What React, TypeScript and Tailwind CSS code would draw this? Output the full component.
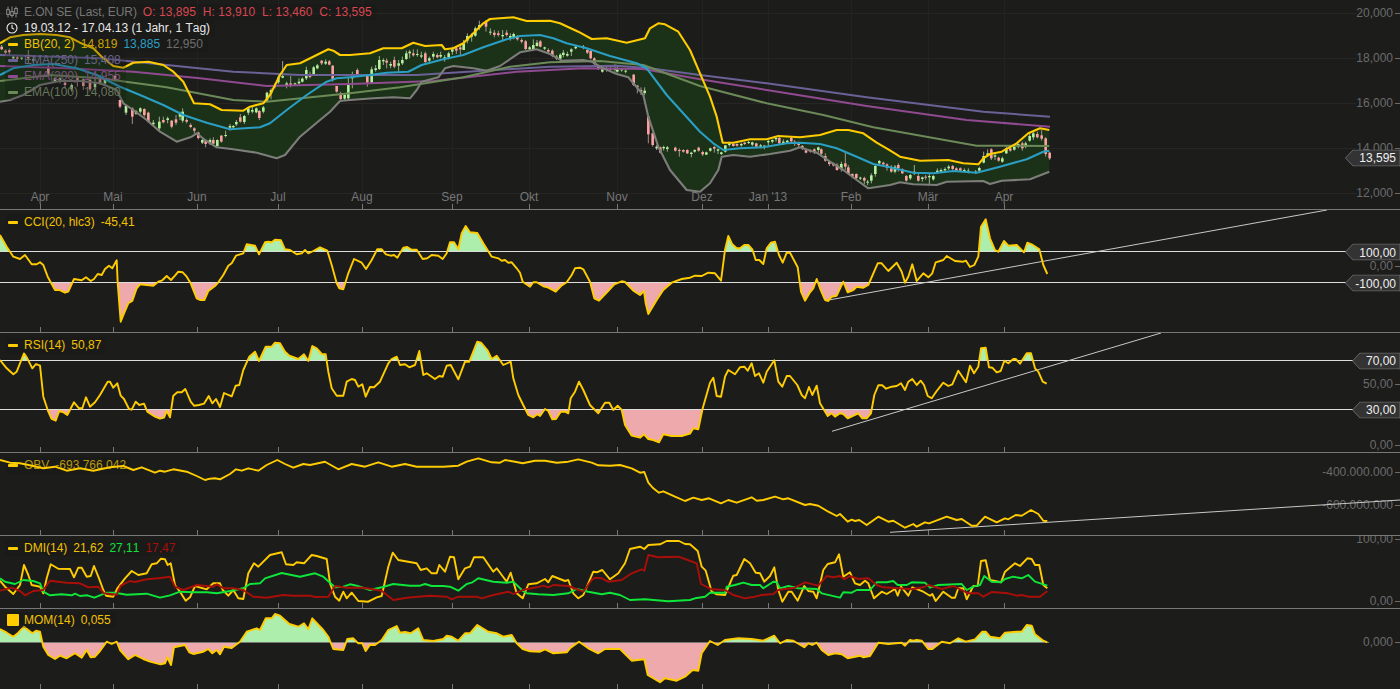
import type { ReactNode } from 'react';

type Pt = [number, number];

// traced points, read off 3x crops: x/3 + ox, y/3 + oy gives page pixels
const tr = (raw: string, ox: number, oy: number): Pt[] =>
    raw.trim().split(/\s+/).map((p) => {
        const [x, y] = p.split(',').map(Number);
        return [x / 3 + ox, y / 3 + oy] as Pt;
    });
const str = (pts: Pt[]) => pts.map(([x, y]) => `${x.toFixed(1)},${y.toFixed(1)}`).join(' ');

const YELLOW = '#ffcc00';

const bbUpper = [
    ...tr('0,130 30,112 70,105 120,102 170,105 210,112 240,128 280,145 305,170 340,198 370,203 400,188 445,185 490,195 520,215 550,245 582,310 630,313 665,330 730,332 750,320 790,310 810,285 840,225 860,195 900,190 950,165 985,148 1000,152 1020,165 1050,165', 0, 0),
    ...tr('60,160 100,145 155,145 190,128 225,138 275,135 285,148 310,145 340,130 370,100 400,70 420,57 490,52 530,63 600,62 630,70 685,95 725,117 770,115 830,128 885,115 900,85 925,70 945,73 985,95 1020,150 1050,220', 350, 0),
    ...tr('30,290 50,350 68,428 100,428 150,418 200,418 235,408 300,412 360,405 410,390 445,390 490,400 530,428 565,448 600,470 660,482 745,480 790,490 835,493 850,475 870,462 905,455 950,430 985,400 1020,385 1048,390', 700, 0),
];
const bbMid = [
    ...tr('0,225 40,205 100,195 160,192 230,205 290,225 360,260 420,285 490,315 550,345 620,368 690,388 780,382 810,370 860,330 920,285 980,245 1010,235 1050,232', 0, 0),
    ...tr('60,225 110,218 175,215 215,195 280,178 340,165 400,142 470,118 510,108 570,105 610,115 650,130 710,145 780,168 860,190 890,205 950,285 1050,395', 350, 0),
    ...tr('40,430 70,450 120,445 190,442 260,430 300,428 360,432 410,445 470,470 520,492 570,502 640,518 700,520 760,513 830,518 900,500 980,478 1030,455 1048,452', 700, 0),
];
const bbLower = [
    ...tr('0,305 30,300 70,285 120,255 180,243 240,243 300,250 350,270 370,310 400,330 440,360 480,395 530,425 575,410 590,400 615,420 650,442 700,448 770,458 830,475 855,465 900,410 960,360 990,335 1020,303 1050,300', 0, 0),
    ...tr('70,295 130,292 180,295 200,270 215,245 265,232 285,205 310,198 370,205 410,212 450,198 510,157 560,148 600,162 635,182 700,180 725,185 760,205 800,222 835,232 880,285 895,350 925,440 960,510 1010,570 1050,575', 350, 0),
    ...tr('30,550 55,510 65,470 100,465 150,470 210,462 270,452 300,442 350,458 390,485 430,510 470,540 505,565 570,555 600,547 640,553 710,555 740,545 850,543 870,552 905,542 990,538 1048,515', 700, 0),
];
const ema250 = [
    ...tr('0,165 100,168 300,175 500,195 700,215 900,225 1050,225', 0, 0),
    ...tr('200,225 400,212 600,200 800,197 900,205 1050,225', 350, 0),
    ...tr('200,250 500,292 850,335 1050,350', 700, 0),
];
const ema200 = [
    ...tr('0,198 200,205 400,215 600,235 800,258 1050,252', 0, 0),
    ...tr('250,243 500,215 700,205 880,207 1050,238', 350, 0),
    ...tr('200,270 500,318 800,360 1050,380', 700, 0),
];
const ema100 = [
    ...tr('0,243 150,225 300,235 500,262 700,300 800,305 1050,280', 0, 0),
    ...tr('150,262 340,232 480,200 600,187 750,183 880,195 1050,258', 350, 0),
    ...tr('200,310 370,345 520,382 830,437 1048,438', 700, 0),
];

const candles1 = '5,135,150,140,148,r 17,148,165,152,158,r 28,145,165,150,157,r 40,165,185,170,175,g 52,168,185,172,176,r 65,170,180,173,176,g 85,150,190,170,175,r 100,165,190,178,182,g 145,190,225,200,222,r 165,230,245,235,245,g 180,232,250,235,243,g 195,245,265,248,255,r 215,250,275,255,268,g 232,228,260,232,245,r 250,235,270,238,258,r 270,230,275,240,268,r 285,235,270,250,262,g 300,225,255,235,250,r 315,235,255,240,250,g 345,225,245,228,240,r 360,298,325,300,320,r 378,315,345,318,338,g 397,322,372,325,350,r 408,330,345,333,341,g 421,322,340,325,335,g 433,325,350,327,345,r 445,335,368,338,365,r 460,360,378,368,373,g 478,350,390,365,385,g 490,350,370,360,367,r 503,350,370,355,360,g 515,360,385,362,380,r 528,345,375,358,368,r 540,335,360,342,350,g 548,325,368,335,362,g 560,355,370,360,365,r 572,370,385,375,381,r 583,382,400,385,392,r 595,395,418,398,414,r 607,415,432,420,428,g 617,420,442,422,432,r 630,415,435,420,430,g 640,412,432,420,431,r 652,418,440,420,438,g 664,405,428,407,425,r 677,392,412,405,408,g 690,372,392,378,383,g 700,375,385,378,382,g 709,360,378,366,373,g 721,342,368,352,365,r 733,345,372,348,366,g 745,322,345,325,338,g 757,318,340,330,335,g 769,322,340,325,337,g 778,330,360,333,354,r 790,318,340,322,335,g 801,275,305,278,302,g 813,265,298,270,280,g 825,250,265,255,260,g 835,225,252,232,247,g 848,183,235,228,233,g 860,245,265,250,256,g 872,228,262,250,255,r 885,248,258,250,254,g 897,235,255,245,250,g 907,232,248,236,245,g 919,200,240,210,235,g 930,215,235,225,231,r 941,198,225,202,222,g 952,192,208,196,205,g 965,180,195,182,190,r 977,178,195,185,191,g 988,180,196,184,194,r 998,195,245,197,240,r 1010,258,278,258,275,r 1022,275,300,280,297,r 1034,280,300,285,296,g 1045,230,300,252,295,g';
const candles2 = '7,215,265,225,235,g 22,205,225,210,222,r 52,225,260,228,248,r 65,200,250,208,248,g 77,195,215,205,210,g 88,168,210,180,207,g 100,175,195,180,184,g 110,175,205,182,188,r 122,185,205,192,197,g 133,170,205,180,200,r 146,180,215,190,197,g 157,170,195,180,190,g 169,152,180,160,177,g 179,150,175,155,160,g 190,148,170,160,166,r 202,148,170,162,165,g 214,155,175,166,170,g 226,155,190,160,186,r 238,170,190,175,182,g 250,155,178,162,170,g 262,160,175,165,172,r 272,155,175,165,170,g 284,165,185,172,178,g 296,155,178,160,172,g 307,140,165,148,155,g 319,138,162,145,152,r 331,135,165,142,148,r 341,120,150,130,150,g 352,100,130,108,122,g 365,100,125,105,110,g 376,80,110,85,107,g 388,62,90,75,82,g 408,60,95,65,80,r 421,85,105,95,98,g 433,90,112,98,105,r 445,92,110,100,105,r 458,90,120,105,109,g 470,90,110,98,105,r 481,100,122,108,116,g 491,98,118,102,112,g 502,105,122,108,118,r 515,115,130,120,125,r 527,120,150,124,147,r 539,138,152,142,148,g 550,118,152,135,150,g 561,120,140,128,138,g 571,120,142,124,140,r 584,140,150,142,146,g 595,145,160,150,155,r 607,148,172,152,168,r 620,165,180,170,176,g 631,160,178,164,176,g 640,150,172,158,165,g 652,155,170,162,167,g 664,145,168,148,155,g 677,135,148,140,145,g 700,135,148,140,144,g 712,145,162,150,158,r 722,150,178,153,175,r 733,172,195,175,192,r 745,195,210,198,205,g 757,205,218,208,215,g 770,200,215,205,210,g 782,195,212,204,208,r 795,193,215,205,210,g 802,200,218,208,215,g 815,205,215,208,211,g 827,208,220,212,215,g 851,222,258,224,255,r 862,255,280,257,262,r 873,262,285,270,275,r 884,262,285,272,279,g 895,348,430,350,403,r 908,398,440,400,435,r 920,435,450,440,445,g 931,440,460,442,458,r 941,437,452,441,445,g 952,438,455,442,447,g 976,440,455,443,452,r 988,445,470,450,453,r 1000,448,458,450,455,r 1012,448,462,450,460,r 1024,455,472,458,462,g 1034,448,458,450,455,g 1046,440,455,443,452,r';
const candles3 = '8,452,468,456,463,r 19,455,465,457,464,g 31,443,455,445,452,g 43,438,458,441,446,r 54,445,462,448,452,g 64,455,465,457,462,g 76,435,458,436,455,g 88,425,440,430,435,g 100,428,440,432,438,r 111,430,440,432,437,r 124,428,440,432,436,g 134,425,435,428,432,r 146,423,432,426,429,g 157,425,438,427,434,g 169,428,445,430,440,r 182,432,445,436,440,g 193,435,448,437,440,g 205,418,440,423,427,g 217,418,430,420,425,g 228,410,425,414,418,g 238,410,432,414,430,r 250,418,435,425,432,g 262,420,432,422,428,g 274,410,430,414,424,r 284,420,438,425,432,r 296,425,442,427,435,r 307,435,450,438,445,r 318,448,460,451,458,r 331,448,458,450,455,r 343,445,462,448,456,r 355,440,458,442,450,g 364,445,470,448,461,r 376,460,485,468,482,r 388,480,498,484,492,r 400,488,500,491,496,r 411,490,512,494,510,r 424,485,515,492,505,g 436,455,510,490,500,r 445,495,525,502,522,r 457,520,535,522,530,r 469,520,540,522,534,r 481,530,540,533,536,g 493,530,552,534,542,r 503,540,555,545,548,g 514,520,550,526,542,g 526,495,530,498,522,g 538,480,495,483,490,g 550,485,500,488,493,r 561,490,512,493,503,r 574,495,518,505,515,r 585,495,520,500,515,g 595,490,515,495,505,r 607,505,522,507,520,r 619,525,545,528,542,r 631,522,540,525,535,g 643,495,525,515,520,g 655,520,545,528,542,r 667,530,545,532,537,g 677,525,540,530,533,r 688,520,552,528,532,g 700,525,542,528,538,g 712,505,520,512,517,g 723,505,518,510,515,g 735,502,515,507,511,g 746,495,510,500,505,g 758,495,512,498,507,r 769,502,515,505,512,r 781,502,515,505,512,r 793,505,518,510,514,g 805,505,520,512,516,g 827,510,522,515,518,g 838,500,515,504,512,g 851,455,490,468,488,g 863,448,470,460,465,g 874,445,480,448,475,r 885,460,480,466,470,g 896,470,485,473,482,r 907,470,488,475,485,g 919,435,462,445,460,g 931,440,455,445,452,r 943,432,452,440,449,g 955,430,445,432,440,g 967,425,452,430,445,r 977,425,445,430,440,g 989,400,425,408,422,g 1000,395,420,400,412,g 1012,395,415,402,412,r 1025,390,422,406,416,r 1037,412,470,415,462,r 1049,455,480,458,475,r';

const cci = [
    ...tr('0,90 20,125 40,155 60,162 75,150 95,178 110,178 120,172 130,180 143,215 165,255 178,255 195,263 205,260 222,222 245,226 258,217 272,228 282,222 293,207 305,210 315,192 327,182 337,190 350,166 353,235 362,350 372,325 385,295 397,288 410,250 420,238 440,240 460,242 475,230 487,226 500,213 513,225 525,212 535,200 548,202 560,215 572,235 590,280 600,285 613,285 625,258 645,243 655,232 670,210 685,182 695,175 708,152 730,145 740,118 765,122 777,148 795,112 805,110 815,112 825,104 843,106 855,133 870,135 890,148 905,145 915,135 925,145 940,138 960,127 982,137 995,180 1010,235 1018,250 1030,253 1045,205 1062,162 1085,173 1098,192 1115,165 1132,133 1145,133 1158,148 1172,152 1182,150 1192,158 1210,128 1222,126 1235,134 1250,134 1268,162 1282,160 1295,150 1315,152 1328,162 1340,145 1350,112 1362,112 1375,133 1385,85 1397,63 1410,82 1432,84 1450,115 1475,155 1495,160 1505,167 1515,165 1525,173 1535,172 1550,190 1560,203 1568,230', 0, 205),
    ...tr('15,245 25,232 35,232 55,244 70,248 92,260 108,243 125,232 140,210 150,190 165,188 175,193 195,230 208,280 222,287 245,263 268,238 290,229 300,231 325,257 345,270 357,258 362,295 370,327 395,285 415,255 440,233 470,222 495,218 510,212 530,213 550,203 570,205 588,227 600,135 610,93 622,118 635,130 645,130 658,120 670,120 682,133 692,165 703,165 715,177 725,130 738,113 750,110 762,150 773,173 785,143 795,143 818,187 828,260 840,287 855,262 865,250 875,222 885,250 900,285 910,288 920,275 935,272 955,230 968,262 985,255 995,245 1015,248 1030,240 1058,175 1070,175 1090,198 1115,173 1130,200 1140,233 1150,215 1162,178 1175,228 1195,205 1210,217 1222,205 1232,172 1255,165 1265,153 1290,168 1315,170 1323,167 1335,186 1348,180 1360,155 1368,65 1382,43 1395,100 1410,135 1420,140 1437,108 1450,122 1475,120 1497,142 1507,113 1520,118 1543,133 1555,180 1567,207', 525, 205),
];
const rsi = [
    ...tr('0,465 20,490 40,508 50,500 72,445 82,460 97,490 108,477 120,482 130,575 145,620 155,642 167,647 178,618 190,622 202,630 222,592 237,610 247,610 258,577 270,605 285,592 300,570 323,530 330,530 340,548 352,535 362,572 372,582 387,612 395,614 407,590 418,600 432,596 442,620 465,635 480,641 492,638 500,618 510,637 520,572 532,562 545,562 556,552 572,590 582,602 597,600 612,596 626,573 637,595 648,582 660,606 672,564 695,574 707,542 718,540 730,495 748,455 765,440 777,468 797,425 815,425 825,413 840,415 855,440 868,452 895,462 912,448 925,468 937,423 950,430 965,447 977,448 985,500 995,550 1010,572 1030,572 1040,530 1055,522 1065,525 1075,545 1087,538 1097,575 1110,546 1122,547 1140,530 1165,475 1175,462 1190,455 1200,480 1215,478 1228,487 1245,480 1258,438 1270,510 1280,505 1305,522 1318,513 1328,515 1340,482 1352,480 1375,523 1395,470 1408,470 1432,410 1443,413 1462,435 1475,462 1490,452 1510,480 1532,470 1540,520 1555,570 1568,597', 0, 205),
    ...tr('10,630 25,637 37,628 45,633 60,612 70,618 82,643 93,642 107,620 120,620 130,625 137,580 150,560 162,530 175,555 195,600 220,625 240,593 253,593 265,615 278,602 290,615 300,660 320,692 345,698 357,688 370,702 385,705 402,712 415,688 440,693 470,693 495,686 505,670 520,673 533,610 555,533 565,518 575,573 588,575 600,515 610,495 630,508 645,487 658,485 668,497 680,475 690,513 702,505 715,533 725,500 748,466 760,530 772,545 785,513 795,513 817,540 830,570 840,580 852,546 862,570 875,542 885,595 908,633 920,625 930,635 945,625 955,627 968,640 1000,625 1012,640 1025,640 1038,625 1048,570 1060,541 1072,541 1083,551 1100,545 1115,543 1128,535 1140,555 1150,530 1162,522 1175,540 1187,527 1197,540 1208,573 1220,580 1235,558 1255,533 1270,543 1282,538 1300,497 1323,532 1335,482 1347,505 1360,485 1368,430 1382,428 1392,487 1402,488 1415,502 1427,498 1438,467 1450,475 1465,462 1472,462 1485,476 1505,445 1518,445 1530,490 1540,500 1553,530 1565,536', 525, 205),
];
const obv = [
    ...tr('0,30 30,38 60,40 100,48 130,55 165,50 200,62 240,55 280,62 330,52 370,48 400,60 425,52 465,68 480,62 495,65 520,58 560,65 590,78 615,90 630,86 645,85 660,88 690,72 708,58 725,62 745,55 775,62 800,45 832,30 855,42 880,53 910,42 930,45 975,35 1015,58 1055,42 1095,50 1135,37 1175,50 1215,42 1250,50 1290,50 1330,50 1375,47 1400,35 1435,25 1475,37 1500,38 1515,30 1545,35 1568,40', 0, 450),
    ...tr('30,32 60,32 95,38 130,35 160,28 200,38 220,46 255,47 285,45 320,55 345,68 358,66 370,98 385,115 402,128 415,124 450,140 480,153 505,143 530,150 552,145 588,160 610,150 635,158 680,142 695,152 715,150 750,140 775,148 790,145 840,165 855,162 880,167 910,185 935,198 945,192 968,215 980,209 990,213 1003,210 1025,225 1060,200 1090,215 1105,212 1140,233 1165,222 1175,230 1200,217 1212,220 1265,200 1295,210 1310,207 1340,227 1355,227 1380,200 1415,217 1440,205 1450,208 1472,195 1490,197 1518,180 1540,192 1555,212 1567,213', 525, 450),
];
const dmi = [
    ...tr('0,392 15,410 40,432 60,405 72,345 85,375 95,405 120,410 130,430 140,385 152,343 175,356 210,357 222,382 235,353 245,353 260,380 272,378 282,348 297,385 310,420 318,437 340,440 352,415 375,385 395,363 415,375 440,370 455,343 470,340 483,326 495,328 503,345 512,340 525,405 540,425 557,452 570,442 585,408 620,418 640,400 660,400 668,420 685,437 700,420 715,445 730,447 745,370 762,340 775,350 810,315 845,307 858,343 880,345 890,337 912,340 935,315 950,318 980,327 990,400 1005,440 1018,452 1030,425 1040,445 1055,428 1075,453 1105,455 1130,442 1145,438 1165,350 1178,308 1195,330 1250,340 1262,360 1280,355 1295,370 1310,370 1318,345 1335,365 1350,320 1362,322 1375,388 1395,355 1410,350 1422,322 1450,322 1480,365 1490,355 1520,395 1532,368 1550,430 1568,445', 0, 450),
    ...tr('10,403 35,400 60,387 70,397 82,378 120,393 130,390 145,430 160,445 175,435 205,365 215,367 232,360 255,388 280,370 300,340 315,297 345,290 358,297 370,285 405,283 425,273 462,273 480,282 495,283 518,303 530,350 542,362 560,425 575,433 600,435 625,377 635,375 658,327 675,340 692,368 705,370 718,395 735,378 748,352 760,420 772,455 790,425 800,425 818,452 838,408 850,423 865,425 875,445 895,360 908,342 930,337 942,313 955,380 975,367 990,400 1005,405 1020,392 1030,400 1047,445 1070,425 1085,432 1110,417 1118,437 1128,410 1150,437 1162,412 1195,425 1215,437 1222,432 1232,453 1255,425 1280,443 1290,443 1300,415 1315,415 1325,448 1345,408 1358,408 1368,333 1382,331 1395,390 1428,397 1440,365 1470,340 1485,348 1507,325 1520,327 1530,345 1543,345 1555,405 1567,415', 525, 450),
];
const dmiPlus = [
    ...tr('0,385 15,395 45,402 70,390 100,393 120,400 130,425 150,436 185,433 215,436 225,431 240,438 262,436 283,443 300,436 320,428 345,428 380,434 440,431 480,443 510,436 540,425 580,427 620,427 650,430 690,423 730,415 750,402 780,400 795,385 845,369 900,380 945,370 970,380 1005,412 1030,410 1050,403 1070,407 1110,420 1145,412 1180,402 1230,407 1260,407 1275,402 1295,408 1330,408 1350,410 1375,422 1400,402 1415,398 1435,385 1480,395 1520,398 1540,395 1568,422', 0, 450),
    ...tr('5,430 40,433 85,435 130,430 155,417 190,425 230,433 255,428 285,435 315,450 360,448 430,454 495,450 510,445 540,440 555,428 600,428 605,410 630,405 655,398 680,405 705,405 715,415 745,395 755,397 765,415 790,408 820,415 875,417 890,430 945,443 955,427 980,428 995,420 1035,420 1055,397 1085,397 1105,393 1118,405 1145,405 1160,397 1200,398 1215,413 1240,405 1310,402 1325,420 1345,410 1365,405 1378,378 1400,395 1428,397 1440,387 1465,380 1490,385 1510,375 1530,395 1567,407', 525, 450),
];
const dmiMinus = [
    ...tr('0,422 35,413 60,423 75,436 100,423 130,420 150,392 200,398 240,400 265,412 295,410 312,430 350,434 362,407 390,393 405,396 440,388 475,385 510,380 525,410 550,420 590,405 640,410 650,403 670,415 700,415 730,420 760,440 800,443 850,435 880,437 930,437 945,441 985,440 1005,408 1040,413 1090,413 1145,422 1180,450 1220,443 1290,437 1340,440 1355,448 1375,440 1430,440 1445,445 1480,435 1525,425 1540,432 1568,420', 0, 450),
    ...tr('35,412 55,407 70,412 85,405 130,408 175,425 200,390 210,383 230,385 250,395 290,390 320,370 350,358 358,362 370,315 400,322 460,320 480,327 515,340 528,402 560,418 600,420 625,435 660,445 690,440 710,435 745,432 760,420 810,413 840,397 880,407 905,378 925,382 945,378 958,388 975,378 1000,387 1030,385 1055,405 1075,412 1120,415 1160,418 1195,412 1210,405 1250,417 1285,408 1330,430 1360,430 1375,440 1400,426 1450,430 1475,437 1490,435 1510,440 1545,440 1567,423', 525, 450),
];
const mom = [
    ...tr('0,537 20,548 40,560 55,548 72,530 97,550 108,542 120,545 130,590 145,615 165,627 180,617 200,625 225,610 245,623 260,600 272,622 285,620 300,603 320,575 335,582 350,575 360,600 385,628 405,615 430,627 450,635 482,643 495,640 502,622 513,645 522,592 555,585 568,607 580,612 610,605 625,597 637,610 650,600 660,613 672,590 695,594 720,575 740,545 770,535 780,540 797,505 815,505 825,492 840,497 868,522 895,530 912,520 925,538 937,505 970,540 985,560 1000,597 1030,600 1042,567 1060,565 1075,580 1087,580 1097,603 1110,584 1125,585 1145,570 1165,540 1190,528 1200,548 1215,546 1232,550 1255,535 1270,570 1300,573 1330,567 1340,557 1355,560 1375,572 1395,550 1410,550 1432,525 1465,545 1490,550 1510,560 1535,555 1550,580 1568,597', 0, 450),
    ...tr('15,604 45,605 60,598 85,610 125,607 135,595 162,575 190,595 220,610 240,597 285,597 320,632 358,628 368,675 405,697 420,685 455,692 480,680 503,660 520,662 530,610 555,573 578,585 600,570 640,565 680,567 715,572 748,557 765,580 785,570 805,572 838,592 850,580 862,585 875,578 890,600 910,615 930,610 950,613 968,625 1005,617 1015,622 1035,618 1060,578 1090,582 1130,578 1140,587 1155,570 1165,572 1175,570 1190,572 1210,597 1222,597 1250,575 1275,580 1300,565 1322,575 1350,568 1372,545 1382,545 1395,560 1425,565 1440,548 1475,545 1490,545 1505,525 1520,527 1530,553 1555,572 1567,577', 525, 450),
];

const monthTicks = [40, 113, 197, 278, 362, 452, 529, 617, 702, 768, 851, 928, 1004];
const months = ['Apr', 'Mai', 'Jun', 'Jul', 'Aug', 'Sep', 'Okt', 'Nov', 'Dez', "Jan '13", 'Feb', 'Mär', 'Apr'];

function Candles({ raw, ox }: { raw: string; ox: number }) {
    return (
        <g>
            {raw.split(' ').map((c, i) => {
                const p = c.split(',');
                const [x, wt, wb, bt, bb] = p.slice(0, 5).map((n) => Number(n) / 3);
                const up = p[5] === 'g';
                return (
                    <g key={i}>
                        <line x1={x + ox} x2={x + ox} y1={wt} y2={wb} stroke={up ? '#b9c9a8' : '#c9a9a9'} strokeWidth={0.8} />
                        <rect x={x + ox - 1.3} y={bt} width={2.6} height={Math.max(bb - bt, 1)} fill={up ? '#b6f29c' : '#ffa2a2'} />
                    </g>
                );
            })}
        </g>
    );
}

function Line({ pts, color = YELLOW, w = 1.9 }: { pts: Pt[]; color?: string; w?: number }) {
    return <polyline points={str(pts)} fill="none" stroke={color} strokeWidth={w} strokeLinejoin="round" />;
}

// area between the line and a level, clipped to one side of that level
function Area({ pts, level, side, id, color }: { pts: Pt[]; level: number; side: 'up' | 'down'; id: string; color: string }) {
    const last = pts[pts.length - 1][0];
    const poly: Pt[] = [...pts, [last, level], [pts[0][0], level]];
    return (
        <>
            <clipPath id={id}>
                {side === 'up' ? <rect x={0} y={0} width={1400} height={level} /> : <rect x={0} y={level} width={1400} height={689 - level} />}
            </clipPath>
            <polygon points={str(poly)} fill={color} clipPath={`url(#${id})`} />
        </>
    );
}

// layers, bottom to top: fills and ticks, legend and axis texts, lines
function Pane({ top, h, last, children, overlay, above }: { top: number; h: number; last?: boolean; children: ReactNode; overlay: ReactNode; above?: ReactNode }) {
    const box = `0 ${top} 1400 ${h}`;
    return (
        <div className={`relative w-full shrink-0 overflow-hidden ${last ? '' : 'border-b border-[#787878]'}`} style={{ height: last ? h : h + 1 }}>
            <svg className="absolute left-0 top-0" width={1400} height={h} viewBox={box}>
                {children}
                {monthTicks.map((x) => (
                    <line key={x} x1={x + 0.5} x2={x + 0.5} y1={top + h - 5} y2={top + h} stroke="#777" strokeWidth={1} />
                ))}
            </svg>
            {overlay}
            {above && (
                <svg className="absolute left-0 top-0" width={1400} height={h} viewBox={box}>
                    {above}
                </svg>
            )}
        </div>
    );
}

function AxisLabel({ y, text }: { y: number; text: string }) {
    return (
        <div className="absolute right-0 flex h-[14px] items-center gap-[2px] -translate-y-1/2 text-[12px] leading-none text-[#6b6b6b]" style={{ top: y }}>
            <span>{text}</span>
            <span className="h-[1px] w-[5px] bg-[#6b6b6b]" />
        </div>
    );
}

function PriceTag({ y, x, text }: { y: number; x: number; text: string }) {
    const w = 1400 - x;
    return (
        <div className="absolute right-0 -translate-y-1/2" style={{ top: y, width: w, height: 17 }}>
            <svg className="absolute left-0 top-0" width={w} height={17}>
                <polygon points={`0.5,8.5 8,0.5 ${w},0.5 ${w},16.5 8,16.5`} fill="#333333" stroke="#666666" />
            </svg>
            <span className="absolute inset-y-0 right-[4px] flex items-center text-[12px] leading-none text-[#efefef]">{text}</span>
        </div>
    );
}

function Swatch({ color }: { color: string }) {
    return <span className="ml-[1px] h-[3px] w-[10px] shrink-0 rounded-[1px]" style={{ background: color }} />;
}

function LegendRow({ swatch, children }: { swatch?: ReactNode; children: ReactNode }) {
    return (
        <div className="flex h-[16px] w-fit items-center gap-[6px] whitespace-nowrap bg-[#13131340] pl-[2px] pr-[5px] text-[12px] leading-none">
            {swatch}
            {children}
        </div>
    );
}

function ChartIcon() {
    return (
        <svg className="-ml-[1px]" width={12} height={12} viewBox="0 0 12 12" fill="none" stroke="#8a8a8a" strokeWidth={1}>
            <path d="M2 0.5V11.5M6 0.5V11.5M10 0.5V11.5" />
            <rect x={0.7} y={3.5} width={2.6} height={5} fill="#1c1c1b" />
            <rect x={4.7} y={5.5} width={2.6} height={4} fill="#1c1c1b" />
            <rect x={8.7} y={2.5} width={2.6} height={5} fill="#1c1c1b" />
        </svg>
    );
}

function ClockIcon() {
    return (
        <svg className="-ml-[1px]" width={12} height={12} viewBox="0 0 12 12" fill="none" stroke="#eeeeee" strokeWidth={1.1}>
            <circle cx={6} cy={6} r={5} />
            <path d="M6 2.8V6L8.2 7.4" />
        </svg>
    );
}

export default function App() {
    const band: Pt[] = [...bbUpper, ...[...bbLower].reverse()];

    return (
        <div className="flex h-[689px] w-[1400px] flex-col overflow-hidden bg-[#1c1c1b] font-['Liberation_Sans',Arial,sans-serif] [font-kerning:none]">
            {/* Price pane */}
            <Pane
                top={0}
                h={209}
                overlay={
                    <>
                        <div className="absolute left-[5px] top-[4px] flex flex-col">
                            <LegendRow swatch={<ChartIcon />}>
                                <span className="tracking-[-0.1px] text-[#777777]">E.ON SE (Last, EUR)</span>
                                <span className="tracking-[0.05px] text-[#d8474f]">O: 13,895&nbsp; H: 13,910&nbsp; L: 13,460&nbsp; C: 13,595</span>
                            </LegendRow>
                            <LegendRow swatch={<ClockIcon />}>
                                <span className="text-[#e8e8e8]">19.03.12 - 17.04.13 (1 Jahr, 1 Tag)</span>
                            </LegendRow>
                            <LegendRow swatch={<Swatch color={YELLOW} />}>
                                <span className="text-[#f2c200]">BB(20, 2)</span>
                                <span className="text-[#c9a400]">14,819</span>
                                <span className="text-[#2b9ec4]">13,885</span>
                                <span className="text-[#6f6f6f]">12,950</span>
                            </LegendRow>
                            <LegendRow swatch={<Swatch color="#6b6196" />}>
                                <span className="text-[#6a6288]">EMA(250)</span>
                                <span className="text-[#6a6288]">15,408</span>
                            </LegendRow>
                            <LegendRow swatch={<Swatch color="#8f4a90" />}>
                                <span className="text-[#7c4f7c]">EMA(200)</span>
                                <span className="text-[#7c4f7c]">14,955</span>
                            </LegendRow>
                            <LegendRow swatch={<Swatch color="#6b8a58" />}>
                                <span className="text-[#66785a]">EMA(100)</span>
                                <span className="text-[#66785a]">14,080</span>
                            </LegendRow>
                        </div>
                        {months.map((m, i) => (
                            <span key={i} className="absolute top-[191px] -translate-x-1/2 text-[12px] leading-none text-[#777777]" style={{ left: monthTicks[i] }}>
                                {m}
                            </span>
                        ))}
                        <AxisLabel y={13} text="20,000" />
                        <AxisLabel y={58} text="18,000" />
                        <AxisLabel y={103} text="16,000" />
                        <AxisLabel y={148} text="14,000" />
                        <AxisLabel y={193} text="12,000" />
                        <PriceTag y={157.5} x={1345} text="13,595" />
                    </>
                }
            >
                {[13, 58, 103, 148, 193].map((y) => (
                    <line key={y} x1={0} x2={1356} y1={y + 0.5} y2={y + 0.5} stroke="#262625" />
                ))}
                {monthTicks.map((x) => (
                    <line key={x} x1={x + 0.5} x2={x + 0.5} y1={0} y2={204} stroke="#232322" />
                ))}
                <polygon points={str(band)} fill="#1b3218" />
                <Candles raw={candles1} ox={0} />
                <Candles raw={candles2} ox={350} />
                <Candles raw={candles3} ox={700} />
                <Line pts={ema250} color="#6b6196" w={2} />
                <Line pts={ema200} color="#8f4a90" w={2} />
                <Line pts={ema100} color="#6b8a58" w={2} />
                <Line pts={bbLower} color="#7d7d7a" w={2.1} />
                <Line pts={bbMid} color="#2b9ec4" w={2.1} />
                <Line pts={bbUpper} color={YELLOW} w={2.1} />
            </Pane>

            {/* CCI */}
            <Pane
                top={210}
                h={122}
                overlay={
                    <>
                        <div className="absolute left-[5px] top-[4px]">
                            <LegendRow swatch={<Swatch color={YELLOW} />}>
                                <span className="text-[#f2c200]">CCI(20, hlc3)</span>
                                <span className="text-[#f2c200]">-45,41</span>
                            </LegendRow>
                        </div>
                        <AxisLabel y={56} text="0,00" />
                        <PriceTag y={42} x={1345} text="100,00" />
                        <PriceTag y={73} x={1345} text="-100,00" />
                    </>
                }
            >
                <Area pts={cci} level={251.5} side="up" id="cci-up" color="#aeeeac" />
                <Area pts={cci} level={282.5} side="down" id="cci-down" color="#eda9ab" />
                <line x1={0} x2={1346} y1={251.5} y2={251.5} stroke="#dddddd" />
                <line x1={0} x2={1346} y1={282.5} y2={282.5} stroke="#dddddd" />
                <line x1={830} y1={299.8} x2={1327} y2={210} stroke="#c8c8c8" />
                <Line pts={cci} />
            </Pane>

            {/* RSI */}
            <Pane
                top={333}
                h={119}
                overlay={
                    <>
                        <div className="absolute left-[5px] top-[4px]">
                            <LegendRow swatch={<Swatch color={YELLOW} />}>
                                <span className="text-[#f2c200]">RSI(14)</span>
                                <span className="text-[#f2c200]">50,87</span>
                            </LegendRow>
                        </div>
                        <AxisLabel y={51} text="50,00" />
                        <AxisLabel y={112} text="0,00" />
                        <PriceTag y={27.5} x={1352} text="70,00" />
                        <PriceTag y={76.5} x={1352} text="30,00" />
                    </>
                }
            >
                <Area pts={rsi} level={360.5} side="up" id="rsi-up" color="#aeeeac" />
                <Area pts={rsi} level={409.5} side="down" id="rsi-down" color="#eda9ab" />
                <line x1={0} x2={1353} y1={360.5} y2={360.5} stroke="#dddddd" />
                <line x1={0} x2={1353} y1={409.5} y2={409.5} stroke="#dddddd" />
                <line x1={832} y1={431.3} x2={1161} y2={333} stroke="#c8c8c8" />
                <Line pts={rsi} />
            </Pane>

            {/* OBV */}
            <Pane
                top={453}
                h={82}
                overlay={
                    <>
                        <div className="absolute left-[5px] top-[4px]">
                            <LegendRow swatch={<Swatch color={YELLOW} />}>
                                <span className="text-[#b8980f]">OBV</span>
                                <span className="text-[#b8980f]">-693.766.042</span>
                            </LegendRow>
                        </div>
                        <AxisLabel y={19} text="-400.000.000" />
                        <AxisLabel y={52} text="-600.000.000" />
                    </>
                }
                above={
                    <>
                        <line x1={890} y1={532.3} x2={1400} y2={500} stroke="#c8c8c8" />
                        <Line pts={obv} />
                    </>
                }
            >
                <g />
            </Pane>

            {/* DMI */}
            <Pane
                top={536}
                h={72}
                overlay={
                    <>
                        <div className="absolute left-[5px] top-[4px]">
                            <LegendRow swatch={<Swatch color={YELLOW} />}>
                                <span className="text-[#f2c200]">DMI(14)</span>
                                <span className="text-[#f2c200]">21,62</span>
                                <span className="text-[#12e03c]">27,11</span>
                                <span className="text-[#a80f08]">17,47</span>
                            </LegendRow>
                        </div>
                        <AxisLabel y={3} text="100,00" />
                        <AxisLabel y={65} text="0,00" />
                    </>
                }
            >
                <Line pts={dmi} />
                <Line pts={dmiPlus} color="#0ee63a" />
                <Line pts={dmiMinus} color="#a80f08" />
            </Pane>

            {/* Momentum */}
            <Pane
                top={609}
                h={80}
                last
                overlay={
                    <>
                        <div className="absolute left-[5px] top-[3px]">
                            <LegendRow swatch={<span className="-mr-[1px] h-[12px] w-[12px] shrink-0 rounded-[1px] bg-[#ffcc00]" />}>
                                <span className="text-[#f2c200]">MOM(14)</span>
                                <span className="text-[#f2c200]">0,055</span>
                            </LegendRow>
                        </div>
                        <AxisLabel y={33} text="0,000" />
                    </>
                }
            >
                <Area pts={mom} level={642.5} side="up" id="mom-up" color="#aeeeac" />
                <Area pts={mom} level={642.5} side="down" id="mom-down" color="#eda9ab" />
                <line x1={0} x2={1049} y1={642.5} y2={642.5} stroke="#777" />
                <Line pts={mom} />
            </Pane>
        </div>
    );
}
